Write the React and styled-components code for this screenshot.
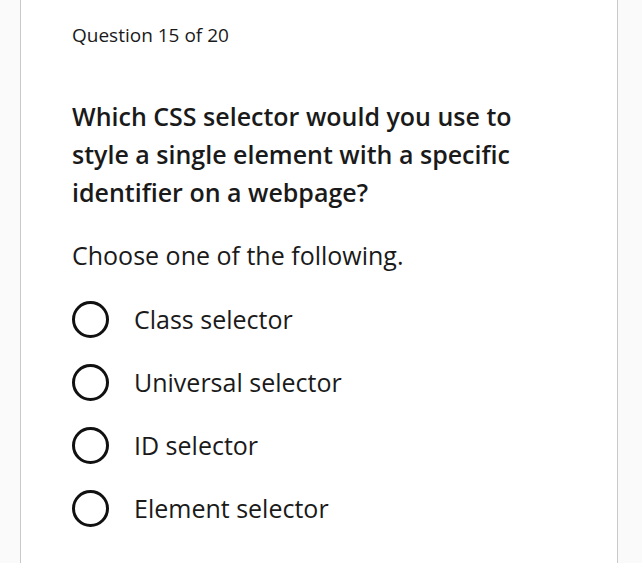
import React from "react";
import styled, { createGlobalStyle } from "styled-components";

const GlobalStyle = createGlobalStyle`
  html, body {
    margin: 0;
    padding: 0;
    background: #fafafa;
    font-family: "Open Sans", "Liberation Sans", sans-serif;
    color: #1a1a1a;
  }
`;

const options = [
  "Class selector",
  "Universal selector",
  "ID selector",
  "Element selector",
];

const App = () => {
  return (
    <>
      <GlobalStyle />
      <Page>
        <Card>
          <Counter>Question 15 of 20</Counter>
          <Prompt>
            Which CSS selector would you use to style a single element with a
            specific identifier on a webpage?
          </Prompt>
          <Hint>Choose one of the following.</Hint>
          <Options>
            {options.map((label) => (
              <Option key={label}>
                <Radio />
                <span>{label}</span>
              </Option>
            ))}
          </Options>
        </Card>
      </Page>
    </>
  );
};

export default App;

const Page = styled.div`
  height: 563px;
  overflow: hidden;
  padding-left: 20px;
`;

const Card = styled.div`
  width: 545px;
  height: 100%;
  box-sizing: content-box;
  background: #fff;
  border-left: 1px solid #c9c9c9;
  border-right: 1px solid #c9c9c9;
  padding: 22px 0 0 51px;
`;

const Counter = styled.div`
  font-size: 19px;
  font-weight: 500;
  line-height: 26px;
`;

const Prompt = styled.h2`
  margin: 49px 0 0;
  max-width: 470px;
  font-size: 25px;
  font-weight: 600;
  line-height: 38px;
`;

const Hint = styled.p`
  margin: 25px 0 0;
  font-size: 25px;
  font-weight: 400;
  line-height: 38px;
`;

const Options = styled.div`
  display: flex;
  flex-direction: column;
  gap: 27px;
  margin-top: 27px;
`;

const Option = styled.label`
  display: flex;
  align-items: center;
  gap: 25px;
  height: 36px;
  font-size: 25px;
`;

const Radio = styled.span`
  width: 31px;
  height: 31px;
  border: 3px solid #111;
  border-radius: 50%;
  flex-shrink: 0;
`;
